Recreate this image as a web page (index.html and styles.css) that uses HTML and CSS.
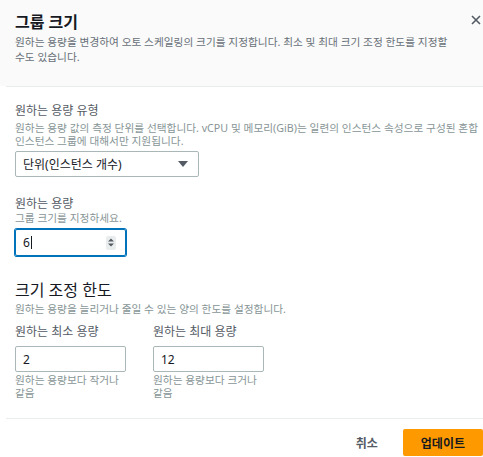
FILE: index.html
```html
<!DOCTYPE html>
<html lang="ko">
<head>
    <meta charset="UTF-8">
    <meta name="viewport" content="width=device-width, initial-scale=1.0">
    <title>그룹 크기</title>
    <link rel="stylesheet" href="styles.css">
</head>
<body>
    <div class="modal">
        <!-- Заголовок -->
        <div class="modal-header">
            <div class="header-text">
                <h1 class="title">그룹 크기</h1>
                <p class="header-desc">원하는 용량을 변경하여 오토 스케일링의 크기를 지정합니다. 최소 및 최대 크기 조정 한도를 지정할 수도 있습니다.</p>
            </div>
            <button class="close-btn" type="button" aria-label="닫기">
                <svg width="10" height="10" viewBox="0 0 10 10">
                    <path d="M1 1 L9 9 M9 1 L1 9" stroke="#545b64" stroke-width="1.6" fill="none"/>
                </svg>
            </button>
        </div>

        <div class="modal-body">
            <div class="field">
                <div class="label">원하는 용량 유형</div>
                <div class="hint">원하는 용량 값의 측정 단위를 선택합니다. vCPU 및 메모리(GiB)는 일련의 인스턴스 속성으로 구성된 혼합 인스턴스 그룹에 대해서만 지원됩니다.</div>
                <div class="select">
                    <span>단위(인스턴스 개수)</span>
                    <span class="select-arrow"></span>
                </div>
            </div>

            <div class="field field-capacity">
                <div class="label">원하는 용량</div>
                <div class="hint">그룹 크기를 지정하세요.</div>
                <div class="number-input">
                    <span class="value">6</span>
                    <span class="caret"></span>
                    <span class="spinner">
                        <svg width="6" height="9" viewBox="0 0 6 9">
                            <path d="M0 3.5 L3 0.5 L6 3.5 Z M0 5.5 L3 8.5 L6 5.5 Z" fill="#545b64"/>
                        </svg>
                    </span>
                </div>
            </div>

            <!-- Лимиты -->
            <h2 class="section-title">크기 조정 한도</h2>
            <div class="hint">원하는 용량을 늘리거나 줄일 수 있는 양의 한도를 설정합니다.</div>

            <div class="limits">
                <div class="limit">
                    <label class="label" for="min-size">원하는 최소 용량</label>
                    <input class="text-input" type="text" id="min-size" value="2">
                    <div class="hint">원하는 용량보다 작거나 같음</div>
                </div>
                <div class="limit">
                    <label class="label" for="max-size">원하는 최대 용량</label>
                    <input class="text-input" type="text" id="max-size" value="12">
                    <div class="hint">원하는 용량보다 크거나 같음</div>
                </div>
            </div>
        </div>

        <div class="modal-footer">
            <button class="cancel-btn" type="button">취소</button>
            <button class="update-btn" type="button">업데이트</button>
        </div>
    </div>
</body>
</html>
```

FILE: styles.css
```css
body {
    font-family: 'Noto Sans', 'Noto Sans CJK KR', sans-serif;
    background-color: #fff;
    color: #16191f;
    margin: 0;
    padding: 0;
    word-break: keep-all;
}

.modal {
    width: 483px;
    overflow: hidden;
}

.modal-header {
    display: flex;
    background-color: #fafafa;
    padding: 12px 2px 21px 15px;
}

.header-text {
    flex: 1;
}

.title {
    margin: 0;
    font-size: 16px;
    line-height: 20px;
    font-weight: bold;
    color: #16191f;
}

.header-desc {
    margin: 3px 0 0;
    font-size: 10.7px;
    line-height: 15px;
    color: #687078;
}

.close-btn {
    width: 10px;
    height: 10px;
    margin: 3px 0 0 10px;
    padding: 0;
    border: none;
    background: none;
    display: flex;
}

.modal-body {
    margin-left: 6px;
    border-top: 1px solid #eaeded;
    padding: 16px 0 18px 9px;
}

.label {
    display: block;
    font-size: 12px;
    line-height: 16px;
    color: #545b64;
}

.hint {
    font-size: 10.7px;
    line-height: 13px;
    color: #879596;
}

.field .hint {
    margin-top: 3px;
}

.field-capacity {
    margin-top: 19px;
}

.field-capacity .hint {
    margin-top: 0;
}

.select {
    display: flex;
    align-items: center;
    justify-content: space-between;
    width: 184px;
    height: 26px;
    box-sizing: border-box;
    margin-top: 3px;
    padding: 0 10px 0 7px;
    border: 1px solid #aab7b8;
    border-radius: 2px;
    font-size: 12px;
    color: #16191f;
}

.select-arrow {
    width: 0;
    height: 0;
    border-left: 5px solid transparent;
    border-right: 5px solid transparent;
    border-top: 6px solid #545b64;
}

.number-input {
    display: flex;
    align-items: center;
    width: 111px;
    height: 27px;
    box-sizing: border-box;
    margin-top: 4px;
    padding: 0 9px 0 7px;
    border: 1px solid #0073bb;
    border-radius: 2px;
    box-shadow: 0 0 0 1px #0073bb;
    font-size: 12px;
}

.caret {
    width: 1px;
    height: 13px;
    background-color: #16191f;
    margin-left: 1px;
}

.spinner {
    margin-left: auto;
    display: flex;
    align-items: center;
    justify-content: center;
    width: 10px;
    height: 14px;
    background-color: #eaeded;
    border-radius: 2px;
}

.section-title {
    margin: 24px 0 0;
    font-size: 16px;
    line-height: 20px;
    font-weight: normal;
    color: #16191f;
}

.section-title + .hint {
    margin-top: 3px;
}

.limits {
    display: flex;
    gap: 27px;
    margin-top: 8px;
}

.limit {
    width: 111px;
}

.text-input {
    display: block;
    width: 111px;
    height: 26px;
    box-sizing: border-box;
    margin-top: 6px;
    padding: 0 7px;
    border: 1px solid #aab7b8;
    border-radius: 2px;
    font-family: inherit;
    font-size: 12px;
    color: #16191f;
}

.limit .hint {
    margin-top: 2px;
}

.modal-footer {
    display: flex;
    justify-content: flex-end;
    align-items: center;
    gap: 25px;
    margin-left: 6px;
    border-top: 1px solid #eaeded;
    padding-top: 10px;
}

.cancel-btn {
    padding: 0;
    border: none;
    background: none;
    font-family: inherit;
    font-size: 12px;
    font-weight: bold;
    color: #545b64;
    cursor: pointer;
}

.update-btn {
    height: 27px;
    padding: 0 18px;
    border: none;
    border-radius: 2px;
    background-color: #ff9900;
    font-family: inherit;
    font-size: 12px;
    font-weight: bold;
    color: #16191f;
    cursor: pointer;
}
```
